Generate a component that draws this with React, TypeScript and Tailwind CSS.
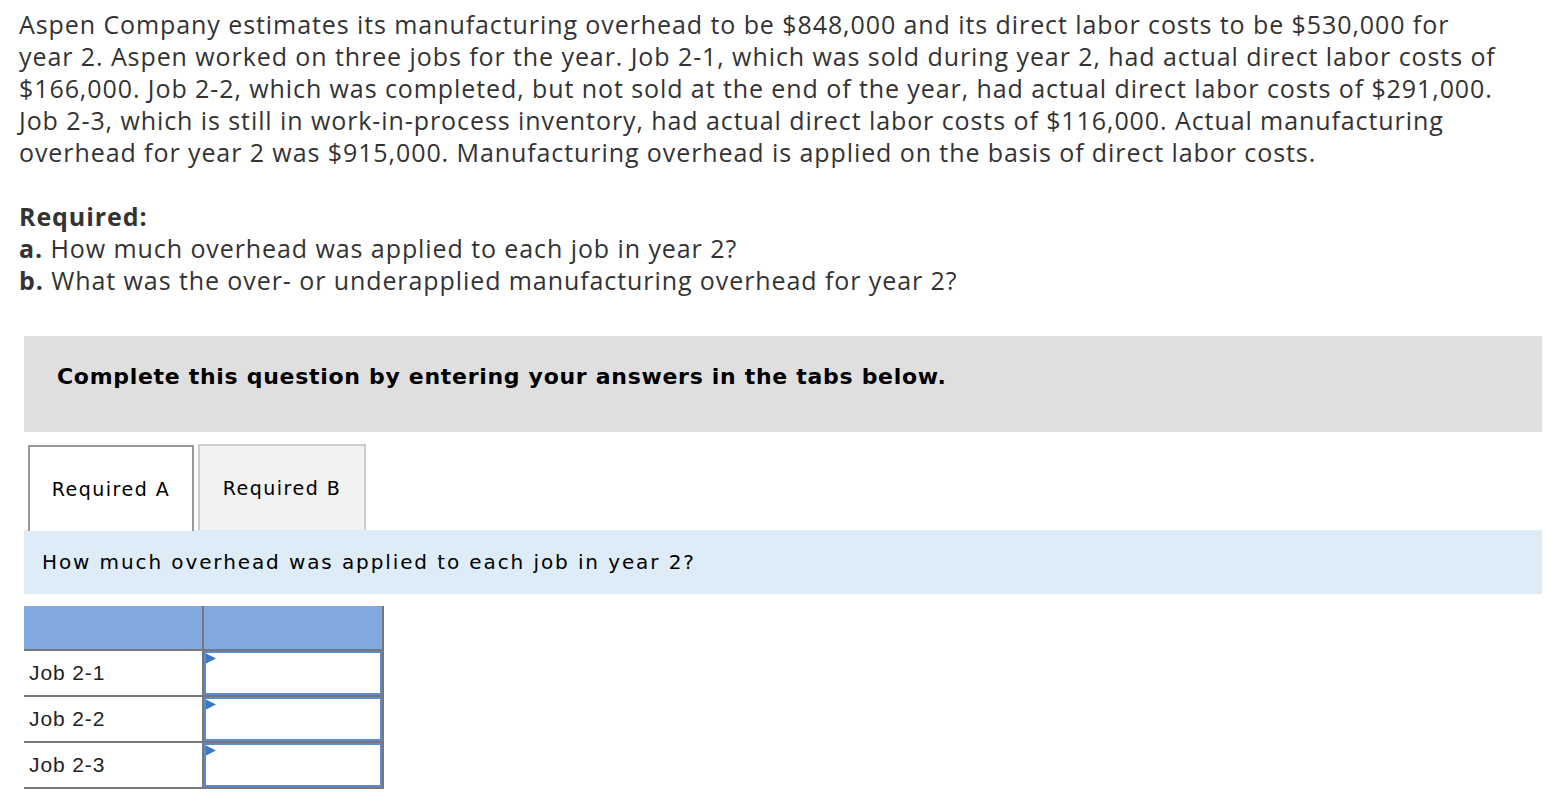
import React from "react";

const para = [
  "Aspen Company estimates its manufacturing overhead to be $848,000 and its direct labor costs to be $530,000 for",
  "year 2. Aspen worked on three jobs for the year. Job 2-1, which was sold during year 2, had actual direct labor costs of",
  "$166,000. Job 2-2, which was completed, but not sold at the end of the year, had actual direct labor costs of $291,000.",
  "Job 2-3, which is still in work-in-process inventory, had actual direct labor costs of $116,000. Actual manufacturing",
  "overhead for year 2 was $915,000. Manufacturing overhead is applied on the basis of direct labor costs.",
];

function InputCell() {
  return (
    <div className="relative h-full border-2 border-[#5b8ad0] bg-white">
      <svg className="absolute left-0 top-0" width="11" height="12" viewBox="0 0 11 12">
        <polygon points="0,0.5 10,5.5 0,10.5" fill="#3c76c6" />
      </svg>
    </div>
  );
}

export default function App() {
  const rows = ["Job 2-1", "Job 2-2", "Job 2-3"];
  return (
    <div className="w-[1562px] h-[804px] bg-white overflow-hidden">
      <div className="pl-[19px] pt-[8px] text-[25px] leading-[32px] tracking-[0.92px] text-[#333]" style={{ fontFamily: "'Open Sans', sans-serif" }}>
        {para.map((l, i) => (
          <div key={i} className="whitespace-nowrap">{l}</div>
        ))}
        <div className="mt-[32px] font-bold">Required:</div>
        <div className="whitespace-nowrap"><span className="font-bold">a.</span> How much overhead was applied to each job in year 2?</div>
        <div className="whitespace-nowrap"><span className="font-bold">b.</span> What was the over- or underapplied manufacturing overhead for year 2?</div>
      </div>

      <div className="ml-[24px] mt-[40px] w-[1518px]" style={{ fontFamily: "'DejaVu Sans', Verdana, sans-serif" }}>
        <div className="h-[96px] bg-[#dfdfdf] pt-[25px] leading-[32px] pl-[33px] text-[22px] tracking-[0.7px] font-bold text-black whitespace-nowrap">
          Complete this question by entering your answers in the tabs below.
        </div>
        <div className="mt-[12px] flex items-end gap-[4px] pl-[4px] h-[86px]">
          <div className="h-[86px] w-[166px] border-2 border-b-0 border-[#999] bg-white flex items-center justify-center text-[19px] tracking-[1.5px] text-black relative z-10 -mb-[1px]">
            Required A
          </div>
          <div className="h-[86px] w-[168px] border-2 border-b-0 border-[#ccc] bg-[#f2f2f2] flex items-center justify-center text-[19px] tracking-[1.5px] text-black">
            Required B
          </div>
        </div>
        <div className="h-[64px] bg-[#deecf8] flex items-center pl-[18px] text-[20px] tracking-[1.9px] text-black whitespace-nowrap">
          How much overhead was applied to each job in year 2?
        </div>
        <div className="mt-[12px] w-[360px]" style={{ fontFamily: "'Liberation Sans', Arial, sans-serif" }}>
          <div className="flex h-[45px] bg-[#82aadf] border-b-2 border-[#777]">
            <div className="w-[180px] border-r-2 border-[#777]" />
            <div className="flex-1 border-r-2 border-[#777]" />
          </div>
          {rows.map((r) => (
            <div key={r} className="flex h-[46px] border-b-2 border-[#777]">
              <div className="w-[180px] border-r-2 border-[#777] flex items-center pl-[5px] text-[21px] tracking-[0.9px] text-[#222]">
                {r}
              </div>
              <div className="flex-1 border-r-2 border-[#777]">
                <InputCell />
              </div>
            </div>
          ))}
        </div>
      </div>
    </div>
  );
}
